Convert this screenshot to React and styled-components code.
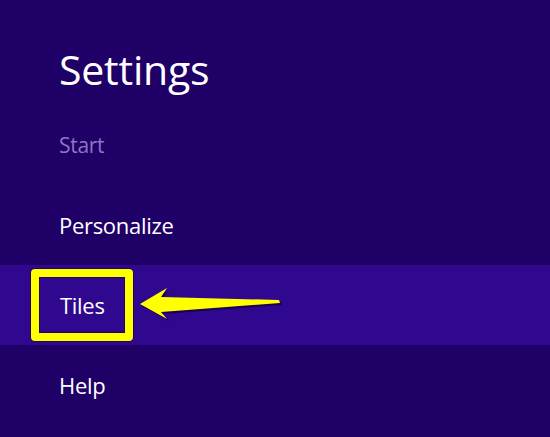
import React from 'react';
import styled, { createGlobalStyle } from 'styled-components';

const GlobalStyle = createGlobalStyle`
	html, body {
		margin: 0;
		padding: 0;
		background: #1f0066;
	}
	body {
		font-family: 'Open Sans', 'Noto Sans', sans-serif;
	}
`;

const Pane = styled.div`
	width: 550px;
	height: 437px;
	background: #1f0066;
	display: flex;
	flex-direction: column;
	overflow: hidden;
`;

const Title = styled.h1`
	margin: 0;
	height: 105px;
	box-sizing: border-box;
	padding: 45px 0 0 59px;
	font-size: 41px;
	font-weight: 400;
	line-height: 48px;
	color: #ffffff;
	letter-spacing: -0.2px;
`;

const Row = styled.div`
	height: 80px;
	display: flex;
	align-items: center;
	padding-left: 59px;
	background: ${props => (props.active ? '#30078f' : 'transparent')};
	color: ${props => (props.muted ? '#8c76c6' : '#ffffff')};
	font-size: ${props => (props.muted ? '21px' : '22px')};
	letter-spacing: -0.3px;
`;

const Callout = styled.span`
	box-sizing: border-box;
	height: 72px;
	margin-left: -28px;
	padding: 0 20px 0 21px;
	display: flex;
	align-items: center;
	border: 8px solid #ffff00;
	border-radius: 4px;
	box-shadow: 0 0 0 1px rgba(0, 0, 0, 0.35), inset 0 0 0 1px rgba(0, 0, 0, 0.35);
`;

const Arrow = styled.svg`
	margin-left: 5px;
	flex: none;
`;

const PointerArrow = () => (
	<Arrow width="148" height="38" viewBox="138 281 148 38">
		<path
			d="M142,301 L169,285 L163,294 L281,297 L282,300 L163,309 L169,316 Z"
			fill="#14004a"
			opacity="0.8"
		/>
		<path
			d="M140,299 L167,283 L161,292 L279,295 L280,298 L161,307 L167,314 Z"
			fill="#ffff00"
		/>
	</Arrow>
);

export default function App() {
	return (
		<Pane>
			<GlobalStyle />
			<Title>Settings</Title>
			<Row muted>Start</Row>
			<Row>Personalize</Row>
			<Row active>
				<Callout>Tiles</Callout>
				<PointerArrow />
			</Row>
			<Row>Help</Row>
		</Pane>
	);
}
